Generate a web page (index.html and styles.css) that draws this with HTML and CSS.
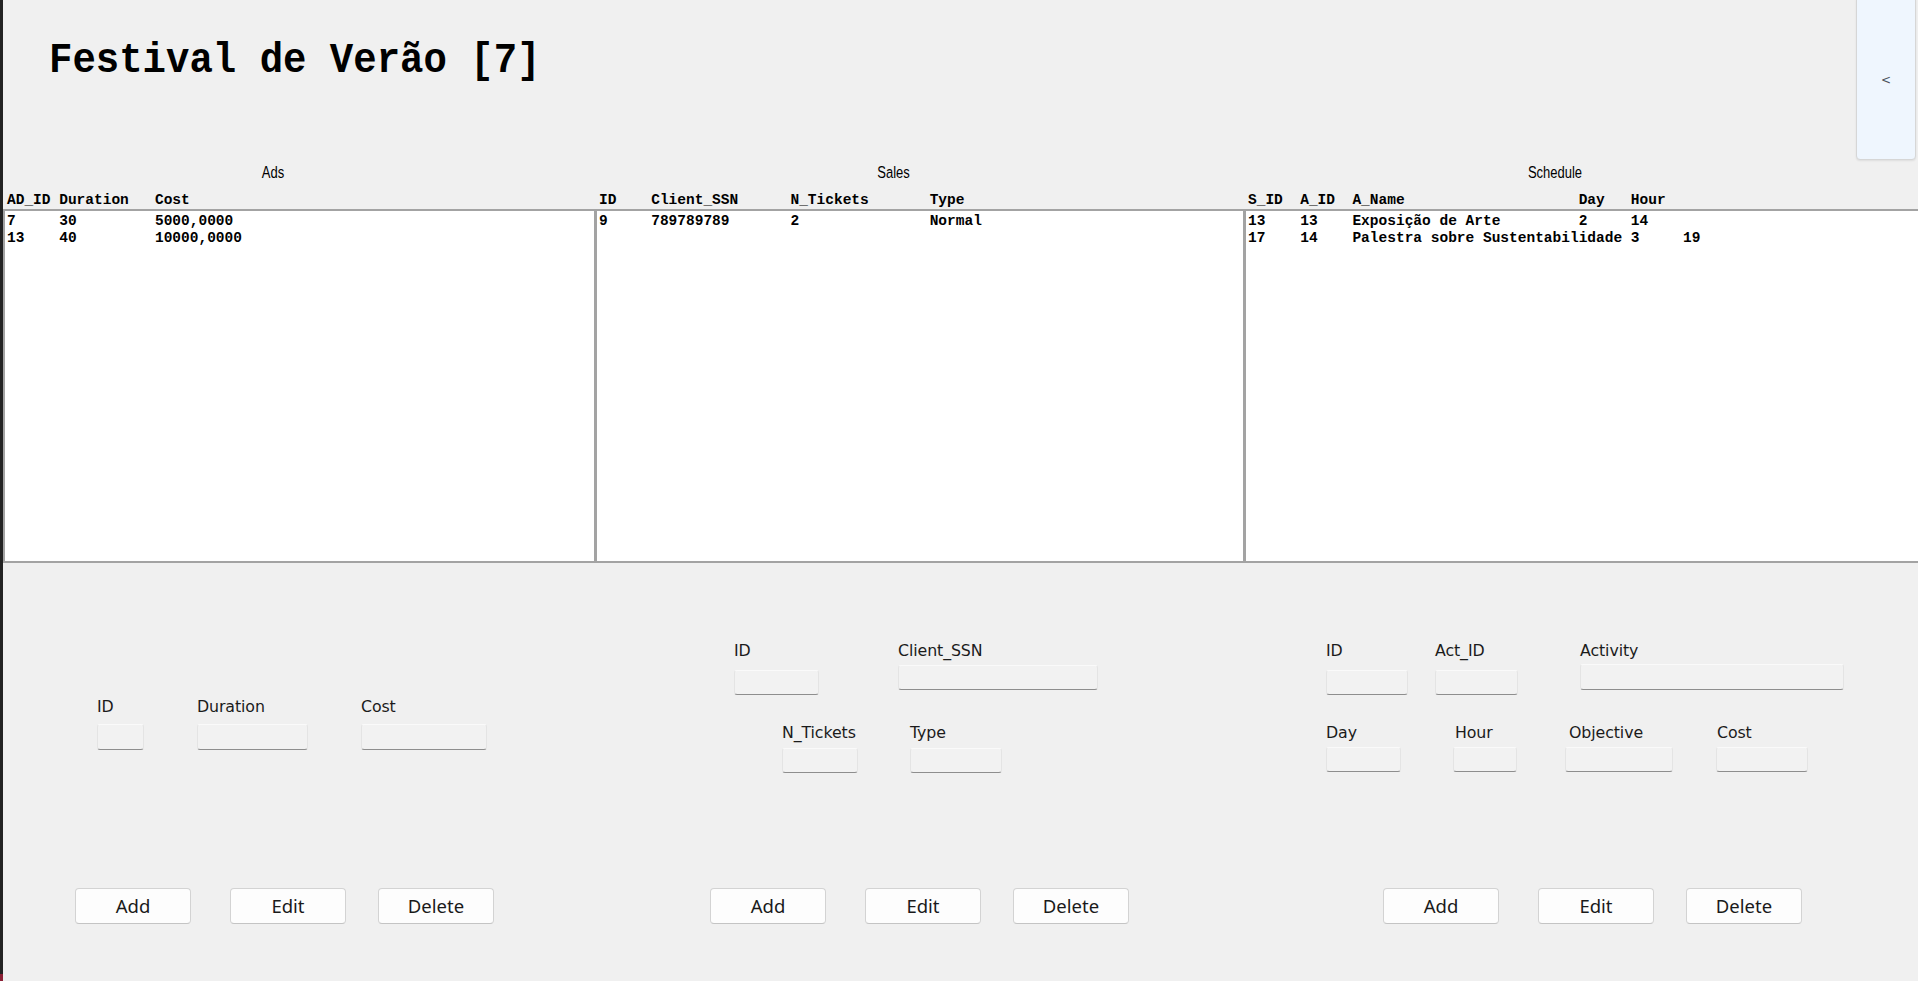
FILE: index.html
```html
<!DOCTYPE html>
<html lang="pt">
<head>
<meta charset="utf-8">
<title>Festival de Verão</title>
<link rel="stylesheet" href="styles.css">
</head>
<body>
<div class="frame">
  <div class="edge"></div>
  <div class="app">
    <header class="header">
      <h1 class="title">Festival de Verão [7]</h1>
    </header>

    <section class="tables">
      <div class="table-col">
        <div class="cap"><span class="cap-text">Ads</span></div>
        <div class="cols">AD_ID Duration   Cost</div>
        <div class="box">
          <div class="row">7     30         5000,0000</div>
          <div class="row">13    40         10000,0000</div>
        </div>
      </div>
      <div class="table-col">
        <div class="cap"><span class="cap-text">Sales</span></div>
        <div class="cols">ID    Client_SSN      N_Tickets       Type</div>
        <div class="box">
          <div class="row">9     789789789       2               Normal</div>
        </div>
      </div>
      <div class="table-col">
        <div class="cap"><span class="cap-text">Schedule</span></div>
        <div class="cols">S_ID  A_ID  A_Name                    Day   Hour</div>
        <div class="box box-last">
          <div class="row">13    13    Exposição de Arte         2     14</div>
          <div class="row">17    14    Palestra sobre Sustentabilidade 3     19</div>
        </div>
      </div>
    </section>

    <section class="forms">
      <div class="form form-ads">
        <div class="fields">
          <div class="frow frow-ads">
            <label class="field f-ads-id"><span class="lbl">ID</span><span class="inp"></span></label>
            <label class="field f-ads-dur"><span class="lbl">Duration</span><span class="inp"></span></label>
            <label class="field f-ads-cost"><span class="lbl">Cost</span><span class="inp"></span></label>
          </div>
        </div>
        <div class="actions actions-ads">
          <button class="btn">Add</button>
          <button class="btn btn-edit">Edit</button>
          <button class="btn btn-delete">Delete</button>
        </div>
      </div>

      <div class="form form-sales">
        <div class="fields">
          <div class="frow frow-s1">
            <label class="field f-s-id"><span class="lbl">ID</span><span class="inp"></span></label>
            <label class="field f-s-ssn"><span class="lbl">Client_SSN</span><span class="inp"></span></label>
          </div>
          <div class="frow frow-s2">
            <label class="field f-s-nt"><span class="lbl">N_Tickets</span><span class="inp"></span></label>
            <label class="field f-s-type"><span class="lbl">Type</span><span class="inp"></span></label>
          </div>
        </div>
        <div class="actions actions-sales">
          <button class="btn">Add</button>
          <button class="btn btn-edit">Edit</button>
          <button class="btn btn-delete">Delete</button>
        </div>
      </div>

      <div class="form form-sched">
        <div class="fields">
          <div class="frow frow-c1">
            <label class="field f-c-id"><span class="lbl">ID</span><span class="inp"></span></label>
            <label class="field f-c-act"><span class="lbl">Act_ID</span><span class="inp"></span></label>
            <label class="field f-c-activity"><span class="lbl">Activity</span><span class="inp"></span></label>
          </div>
          <div class="frow frow-c2">
            <label class="field f-c-day"><span class="lbl">Day</span><span class="inp"></span></label>
            <label class="field f-c-hour"><span class="lbl">Hour</span><span class="inp"></span></label>
            <label class="field f-c-obj"><span class="lbl">Objective</span><span class="inp"></span></label>
            <label class="field f-c-cost"><span class="lbl">Cost</span><span class="inp"></span></label>
          </div>
        </div>
        <div class="actions actions-sched">
          <button class="btn">Add</button>
          <button class="btn btn-edit">Edit</button>
          <button class="btn btn-delete">Delete</button>
        </div>
      </div>
    </section>
  </div>

  <div class="side-tab"><span class="side-arrow">&lt;</span></div>
</div>
</body>
</html>
```

FILE: styles.css
```css
html, body {
  margin: 0;
  padding: 0;
}
body {
  background: #f0f0f0;
  font-family: "Liberation Sans", Arial, sans-serif;
  color: #000;
  overflow: hidden;
}
.frame {
  position: relative;
  width: 1918px;
  height: 981px;
  display: flex;
  overflow: hidden;
}
.edge {
  width: 3px;
  flex: none;
  background: linear-gradient(to bottom, #232323 0, #232323 974px, #8a2035 974px, #8a2035 100%);
}
.app {
  flex: 1;
  display: flex;
  flex-direction: column;
  min-width: 0;
}

/* header */
.header {
  height: 160px;
  box-sizing: border-box;
  padding: 38px 0 0 46px;
}
.title {
  margin: 0;
  font-family: "Liberation Mono", "Courier New", monospace;
  font-weight: bold;
  font-size: 39px;
  line-height: 46px;
  color: #000;
  transform: scaleY(1.08);
  transform-origin: left center;
}

/* tables */
.tables {
  display: grid;
  grid-template-columns: 592px 649px 1fr;
}
.table-col {
  display: flex;
  flex-direction: column;
  min-width: 0;
}
.cap {
  height: 32px;
  line-height: 26px;
  text-align: center;
  padding-right: 52px;
  font-size: 13px;
  font-family: "Liberation Sans", Arial, sans-serif;
  color: #000;
}
.cap-text {
  display: inline-block;
  transform: scaleY(1.22);
}
.cols, .row {
  font-family: "Liberation Mono", "Courier New", monospace;
  font-weight: bold;
  font-size: 14.5px;
  line-height: 17px;
  white-space: pre;
  color: #000;
}
.cols {
  height: 17px;
  padding-left: 4px;
}
.box {
  height: 354px;
  box-sizing: border-box;
  background: #fff;
  border: 2px solid #a3a3a3;
  border-right: 1px solid #a3a3a3;
  padding: 2px 0 0 2px;
  overflow: hidden;
}
.box-last {
  border-right: none;
}

/* forms */
.forms {
  display: grid;
  grid-template-columns: 592px 649px 1fr;
  height: 418px;
}
.form {
  display: flex;
  flex-direction: column;
}
.fields {
  height: 325px;
  box-sizing: border-box;
  padding-top: 79px;
}
.form-ads .fields {
  padding-top: 135px;
}
.frow {
  display: flex;
  align-items: flex-start;
}
.field {
  display: flex;
  flex-direction: column;
}
.lbl {
  font-family: "DejaVu Sans", Verdana, sans-serif;
  font-size: 15.8px;
  line-height: 18px;
  height: 18px;
  color: #1b1b1b;
  white-space: nowrap;
  letter-spacing: -0.1px;
}
.inp {
  display: block;
  height: 25px;
  box-sizing: border-box;
  margin-top: 8px;
  background: #f2f2f2;
  border: 1px solid #e4e4e4;
  border-top-color: #fafafa;
  border-bottom: 1px solid #8e8e8e;
  border-radius: 3px;
}

/* ads form */
.frow-ads {
  padding-left: 94px;
  gap: 53px;
}
.frow-ads .inp { height: 26px; }
.f-ads-id .inp { width: 47px; }
.f-ads-dur .inp { width: 111px; }
.f-ads-cost .inp { width: 126px; }

/* sales form */
.frow-s1 {
  padding-left: 139px;
}
.f-s-id .inp { width: 85px; margin-top: 10px; }
.f-s-ssn { margin-left: 79px; }
.f-s-ssn .inp { width: 200px; margin-top: 5px; }
.frow-s2 {
  padding-left: 187px;
  margin-top: 29px;
}
.f-s-nt .inp { width: 76px; margin-top: 6px; }
.f-s-type { margin-left: 52px; }
.f-s-type .inp { width: 92px; margin-top: 6px; }

/* schedule form */
.frow-c1 {
  padding-left: 82px;
}
.f-c-id .inp { width: 82px; margin-top: 10px; }
.f-c-act { margin-left: 27px; }
.f-c-act .inp { width: 83px; margin-top: 10px; }
.f-c-activity { margin-left: 62px; }
.f-c-activity .inp { width: 264px; margin-top: 4px; height: 26px; }
.frow-c2 {
  padding-left: 82px;
  margin-top: 29px;
}
.frow-c2 .inp { margin-top: 5px; }
.f-c-day .inp { width: 75px; }
.f-c-hour { margin-left: 52px; }
.f-c-hour .lbl { padding-left: 2px; }
.f-c-hour .inp { width: 64px; }
.f-c-obj { margin-left: 48px; }
.f-c-obj .lbl { padding-left: 4px; }
.f-c-obj .inp { width: 108px; }
.f-c-cost { margin-left: 43px; }
.f-c-cost .lbl { padding-left: 1px; }
.f-c-cost .inp { width: 92px; }

/* buttons */
.actions {
  display: flex;
  align-items: flex-start;
}
.actions-ads { padding-left: 72px; }
.actions-sales { padding-left: 115px; }
.actions-sched { padding-left: 139px; }
.btn {
  width: 116px;
  height: 36px;
  margin: 0;
  padding: 0;
  box-sizing: border-box;
  background: #fdfdfd;
  border: 1px solid #d3d3d3;
  border-bottom-color: #c4c4c4;
  border-radius: 4px;
  font-family: "Noto Sans", "Open Sans", sans-serif;
  font-size: 18.5px;
  color: #1a1a1a;
  line-height: 34px;
}
.btn-edit { margin-left: 39px; }
.btn-delete { margin-left: 32px; }

/* side tab overlay */
.side-tab {
  position: absolute;
  top: -4px;
  right: 2px;
  width: 60px;
  height: 164px;
  box-sizing: border-box;
  background: #eff6fe;
  border: 1px solid #d6d6d6;
  border-radius: 4px;
  box-shadow: 0 1px 2px rgba(0,0,0,0.08);
  display: flex;
  align-items: center;
  justify-content: center;
  padding-top: 4px;
}
.side-arrow {
  font-family: "DejaVu Sans", sans-serif;
  font-size: 12px;
  color: #4a525c;
}
```
